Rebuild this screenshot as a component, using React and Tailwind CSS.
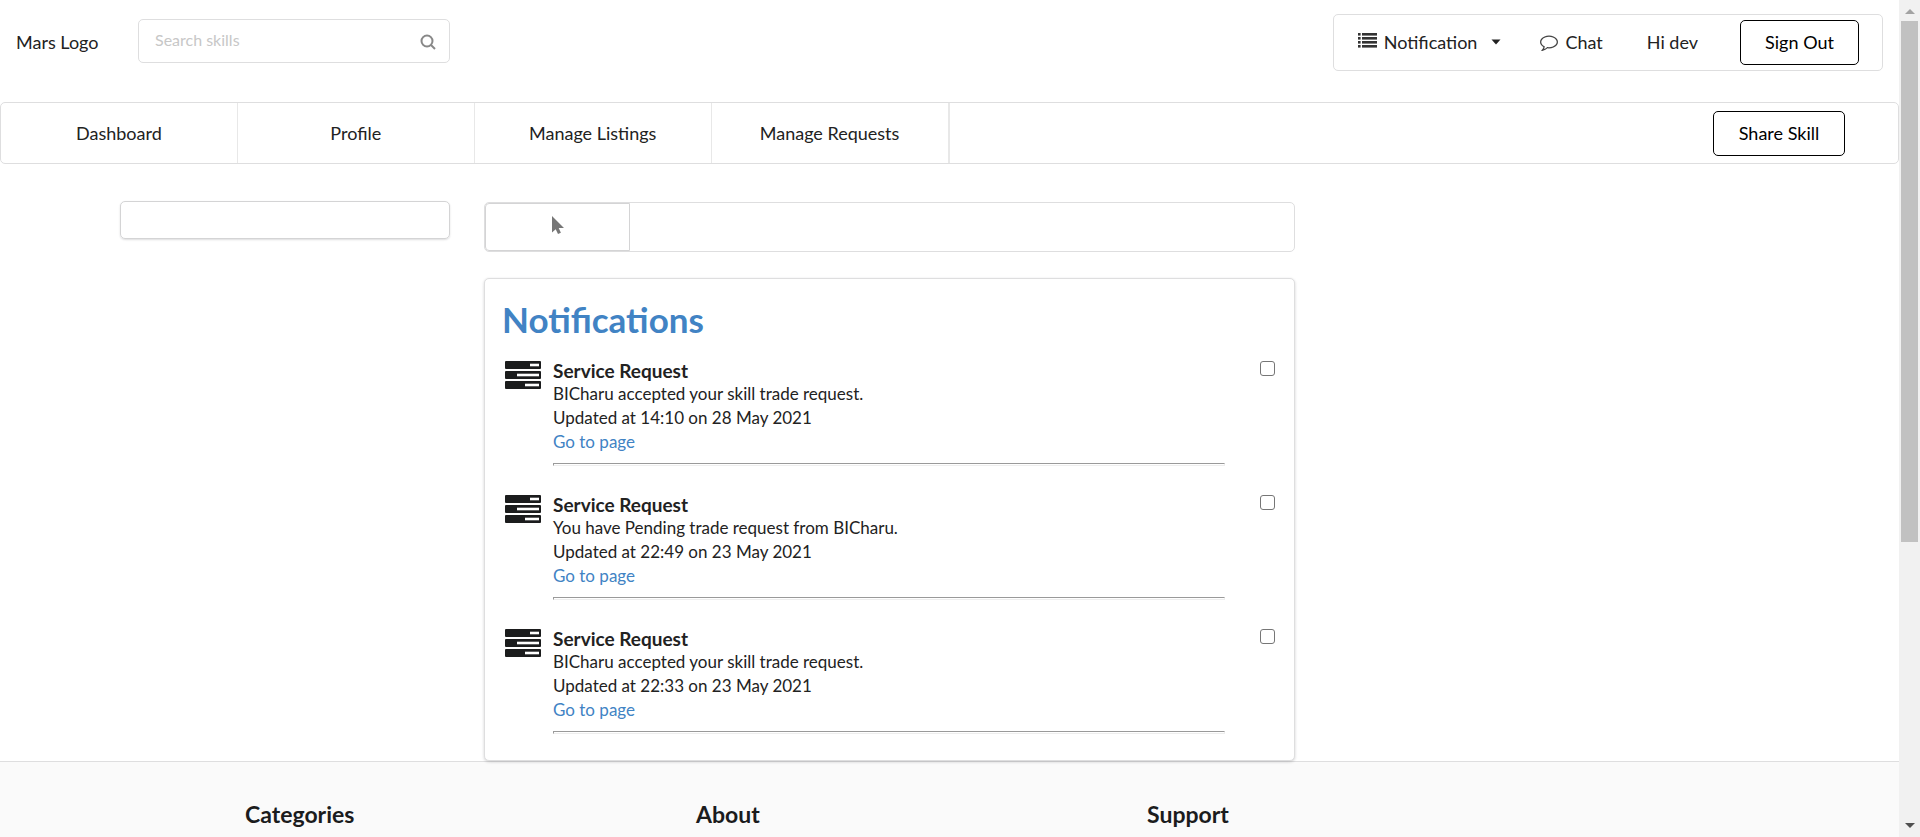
const tabs = ['Dashboard', 'Profile', 'Manage Listings', 'Manage Requests'];

const notifications = [
  { id: 1, message: 'BICharu accepted your skill trade request.', updated: 'Updated at 14:10 on 28 May 2021' },
  { id: 2, message: 'You have Pending trade request from BICharu.', updated: 'Updated at 22:49 on 23 May 2021' },
  { id: 3, message: 'BICharu accepted your skill trade request.', updated: 'Updated at 22:33 on 23 May 2021' },
];

function ListIcon() {
  return (
    <svg viewBox="0 0 19 15" className="mb-1 h-[15px] w-[19px] shrink-0 fill-[#333]" aria-hidden="true">
      {[0, 4, 8, 12].map((y) => (
        <g key={y}>
          <rect x="0" y={y} width="2.600" height="2.600" />
          <rect x="4" y={y} width="15" height="2.600" />
        </g>
      ))}
    </svg>
  );
}

function CommentIcon() {
  return (
    <svg viewBox="0 0 1792 1792" className="size-[18px] shrink-0 fill-[#444]" aria-hidden="true">
      <path d="M896 384q-204 0-381.500 69.500t-282 187.500-104.500 255q0 112 71.500 213.500t201.500 175.500l87 50-27 96q-24 91-70 172 152-63 275-171l43-38 57 6q69 8 130 8 204 0 381.500-69.500t282-187.500 104.500-255-104.500-255-282-187.500-381.500-69.500zm896 512q0 174-120 321.500t-326 233-450 85.500q-70 0-145-8-198 175-460 242-49 14-114 22h-5q-15 0-27-10.500t-16-27.500v-1q-3-4-.5-12t2-10 4.500-9.500l6-9 7-8.500 8-9q7-8 31-34.500t34.500-38 31-39.500 32.500-51 27-59 26-76q-157-89-247.500-220t-90.500-281q0-174 120-321.500t326-233 450-85.500 450 85.500 326 233 120 321.500z" />
    </svg>
  );
}

function TasksIcon() {
  return (
    <svg viewBox="0 0 36 28" className="mt-[3px] h-7 w-9 shrink-0" aria-hidden="true">
      <g className="fill-[#1b1c1d]">
        <rect x="0" y="0" width="36" height="8" rx="1" />
        <rect x="0" y="10" width="36" height="8" rx="1" />
        <rect x="0" y="20" width="36" height="8" rx="1" />
      </g>
      <g className="fill-white">
        <rect x="25" y="2.700" width="9" height="2.600" />
        <rect x="12" y="12.700" width="22" height="2.600" />
        <rect x="20" y="22.700" width="14" height="2.600" />
      </g>
    </svg>
  );
}

function Header() {
  return (
    <header className="flex items-start justify-between pl-4 pr-4 pt-[14px]">
      <div className="flex items-center pt-[5px]">
        <a href="#home" className="w-[122px] pt-[2px]">Mars Logo</a>
        <label className="flex h-11 w-[312px] items-center rounded-[5px] border border-[#dededf] pl-4 pr-[13px]">
          <input
            type="text"
            aria-label="Search skills"
            placeholder="Search skills"
            className="min-w-0 flex-1 pb-[2px] text-base outline-none placeholder:text-[#c7c7c7]"
          />
          <svg viewBox="0 0 16 16" className="mt-[2px] size-4 fill-none stroke-[#888] stroke-2" aria-hidden="true">
            <circle cx="7" cy="7" r="5.500" />
            <path d="M11 11l4 4" />
          </svg>
        </label>
      </div>
      <nav aria-label="Account" className="flex h-[57px] items-center rounded-[5px] border border-[#dededf] pl-6 pr-[23px] pb-px">
        <button type="button" className="flex items-center">
          <ListIcon />
          <span className="ml-[7px]">Notification</span>
          <svg viewBox="0 0 10 6" className="ml-[14px] h-[6px] w-[10px] fill-[#222]" aria-hidden="true">
            <path d="M0.500 0.500h9l-4.500 5z" />
          </svg>
        </button>
        <a href="#chat" className="ml-[39px] flex items-center gap-[7px]">
          <CommentIcon />
          Chat
        </a>
        <span className="ml-11">Hi dev</span>
        <button type="button" className="ml-[42px] h-[45px] w-[119px] rounded-[5px] border border-black text-black">
          Sign Out
        </button>
      </nav>
    </header>
  );
}

function TabBar() {
  return (
    <nav aria-label="Main" className="mt-[31px] flex h-[62px] items-center justify-between rounded-[5px] border border-[#dededf]">
      <div className="flex h-full w-1/2 border-r border-[#e8e8e8]">
        {tabs.map((tab) => (
          <a key={tab} href="#tab" className="flex flex-1 items-center justify-center border-r border-[#e8e8e8]">
            {tab}
          </a>
        ))}
      </div>
      <button type="button" className="mr-[53px] h-[45px] w-[132px] rounded-[5px] border border-black text-black">
        Share Skill
      </button>
    </nav>
  );
}

function NotificationRow({ id, message, updated }) {
  const titleId = `notification-${id}`;
  return (
    <li className="flex items-start">
      <TasksIcon />
      <div className="ml-3 w-[672px] text-[17px]">
        <h2 id={titleId} className="pt-px text-[19px] leading-[23px] font-bold">Service Request</h2>
        <p>{message}</p>
        <p>{updated}</p>
        <a href="#page" className="block text-[#4183c4]">Go to page</a>
        <hr className="mt-[9px] h-[3px] border border-t-[#9a9a9a] border-r-[#eee] border-b-[#eee] border-l-[#9a9a9a]" />
      </div>
      <input
        type="checkbox"
        aria-labelledby={titleId}
        className="mt-[3px] ml-auto size-[15px] appearance-none rounded-[3px] border border-[#767676] bg-white"
      />
    </li>
  );
}

function Content() {
  return (
    <main className="mx-[120px] mt-[37px] flex items-start gap-[34px]">
      <aside className="h-[38px] w-[330px] rounded-[5px] border border-[#d4d4d5] shadow-[0_1px_2px_0_rgba(34,36,38,0.15)]" />
      <div className="w-[811px]">
        <div className="mt-px flex h-[50px] rounded-[5px] border border-[#dededf]">
          <button type="button" aria-label="Select" className="flex w-[145px] items-center justify-center rounded-l-[4px] border border-[#d4d4d5]">
            <svg viewBox="0 0 12 18" className="mb-1 h-[18px] w-3 fill-[#767676]" aria-hidden="true">
              <path d="M0 0v16.500l3.700-3.300 2.300 4.800 2.900-1.300-2.200-4.700H12z" />
            </svg>
          </button>
        </div>
        <section className="relative mt-[26px] rounded-[5px] border border-[#dededf] bg-white pr-[19px] pl-[17px] pt-[17px] pb-[26px] shadow-[0_1px_3px_0_rgba(34,36,38,0.2)]">
          <h1 className="text-[35px] leading-[46px] font-bold text-[#4183c4]">Notifications</h1>
          <ul className="mt-4 flex flex-col gap-[26px] pl-[3px]">
            {notifications.map((item) => (
              <NotificationRow key={item.id} {...item} />
            ))}
          </ul>
        </section>
      </div>
    </main>
  );
}

function Footer() {
  return (
    <footer className="h-[200px] border-t border-[#dededf] bg-[#fafafa] pt-[38px] pl-[245px]">
      <div className="grid w-[1353px] grid-cols-3 text-[23px] leading-7 font-bold text-[#1b1c1d]">
        <h3>Categories</h3>
        <h3>About</h3>
        <h3>Support</h3>
      </div>
    </footer>
  );
}

function ScrollBar() {
  return (
    <div className="flex w-[21px] shrink-0 flex-col items-center bg-[#f1f1f1]" aria-hidden="true">
      <svg viewBox="0 0 10 5" className="mt-[9px] mb-[7px] h-[5px] w-[10px] fill-[#a3a3a3]"><path d="M5 0l5 5H0z" /></svg>
      <div className="h-[521px] w-[17px] bg-[#c1c1c1]" />
      <svg viewBox="0 0 10 5" className="mt-auto mb-[9px] h-[5px] w-[10px] fill-[#505050]"><path d="M0 0h10L5 5z" /></svg>
    </div>
  );
}

export default function App() {
  return (
    <div className="flex h-screen bg-white font-['Lato',sans-serif] text-lg leading-6 text-[#222]">
      <div className="min-w-0 flex-1 overflow-hidden">
        <Header />
        <TabBar />
        <Content />
        <Footer />
      </div>
      <ScrollBar />
    </div>
  );
}
